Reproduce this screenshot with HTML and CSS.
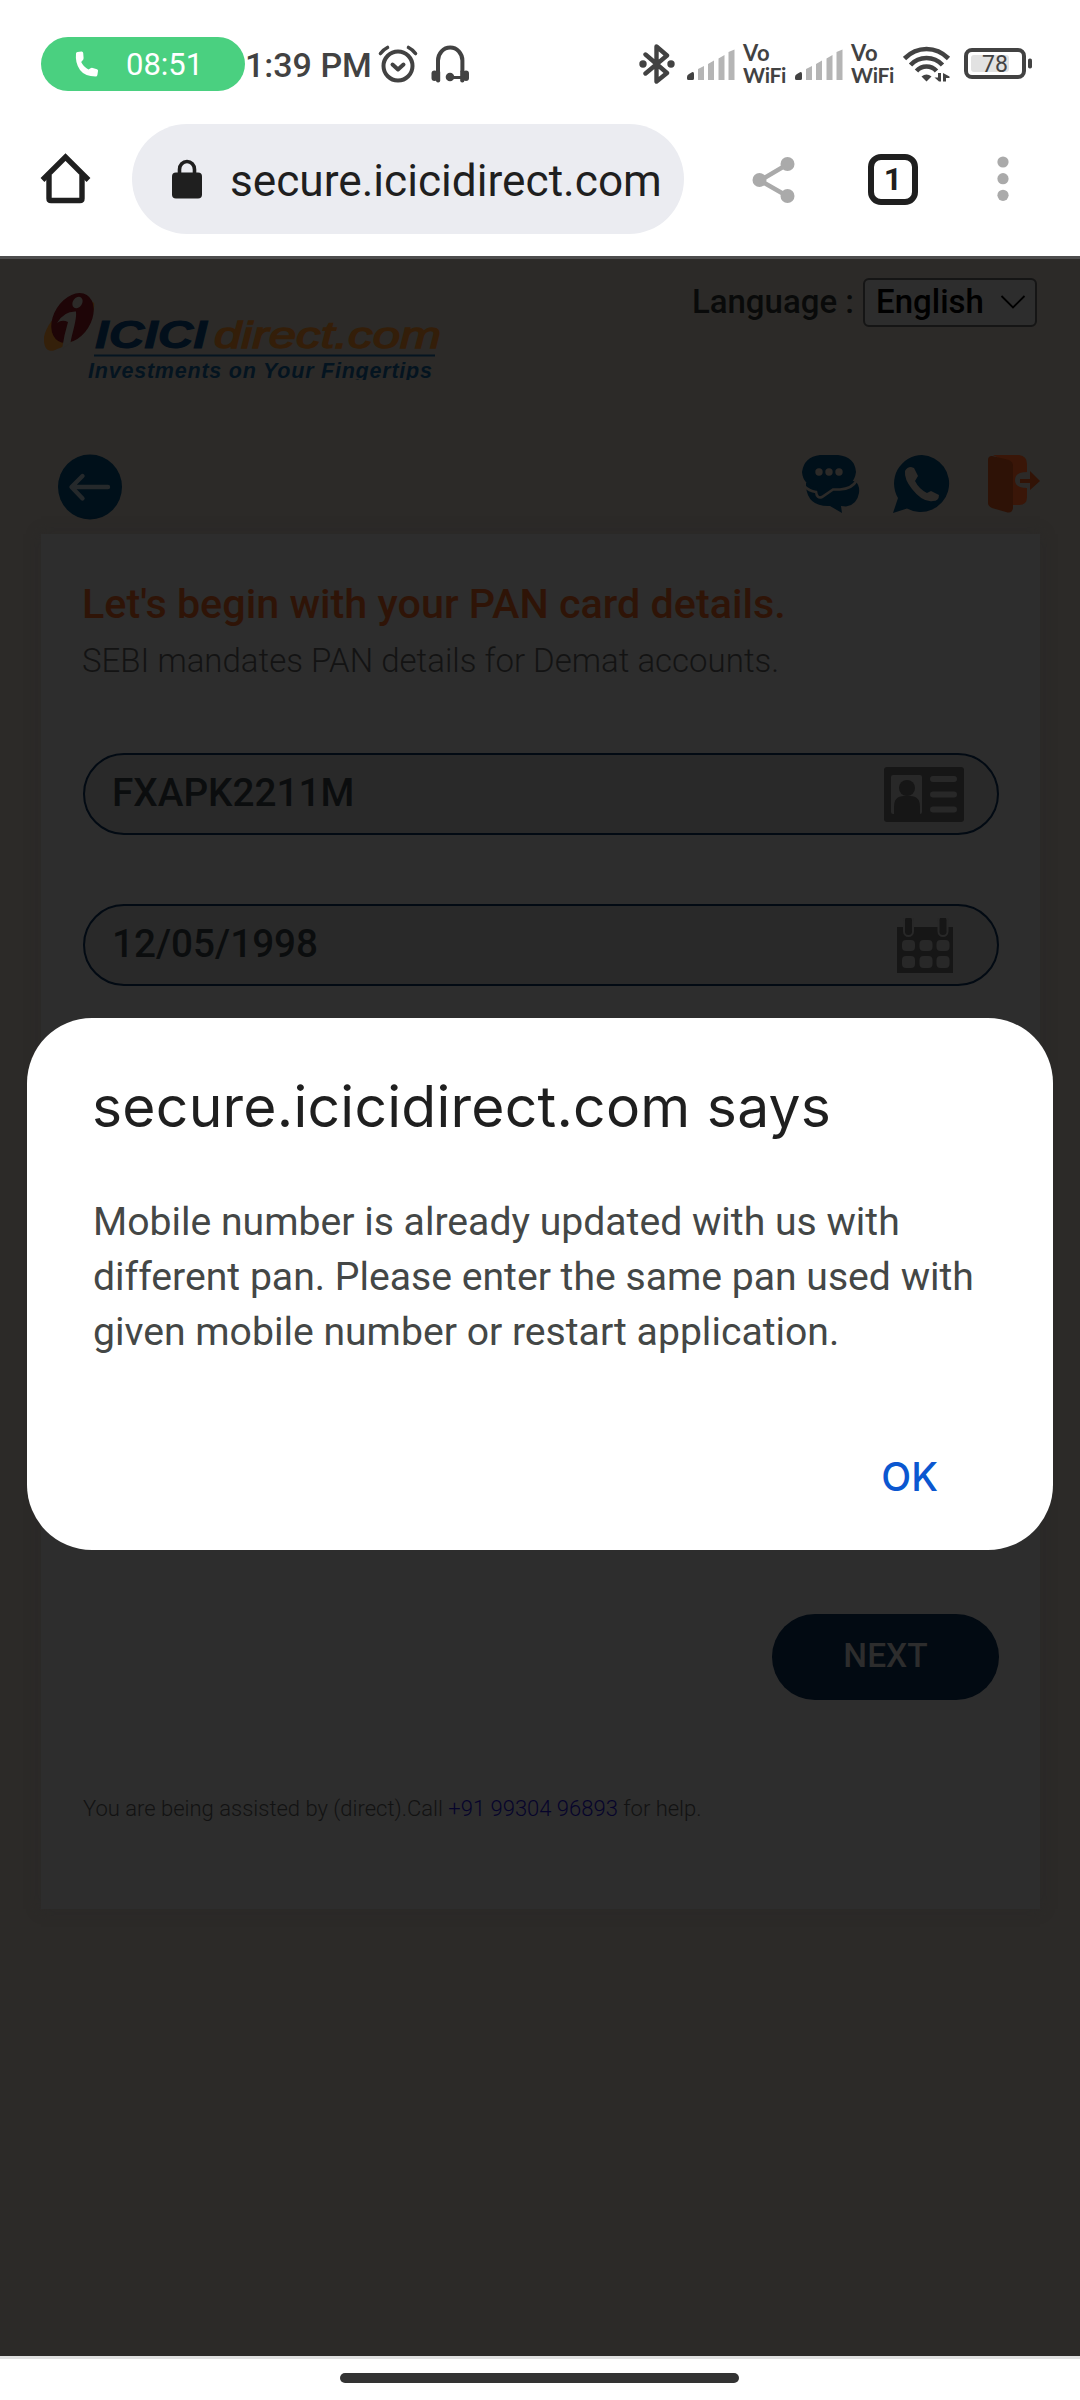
FILE: index.html
```
<!DOCTYPE html>
<html lang="en">
<head>
<meta charset="utf-8">
<title>secure.icicidirect.com</title>
<link rel="stylesheet" href="styles.css">
</head>
<body>
<div class="screen">
  <header class="status">
    <div class="call-pill">
      <svg class="call-icon" width="24" height="26" viewBox="0 0 24 26"><path d="M1 2.500Q1 1 2.500 1L6.500 .5Q8 .4 8.200 2L8.600 7Q8.600 8.500 7.500 9.500L6.200 11Q8.500 16 13.500 18.500L15.500 17.200Q16.500 16.600 17.800 17L22 18.200Q23.300 18.600 23 20L22.400 24Q22.200 25.500 20.500 25.500Q10 25.500 5 19Q0 12 1 2.500Z"/></svg>
      <span class="call-time">08:51</span>
    </div>
    <span class="clock">1:39 PM</span>
    <svg class="alarm" width="42" height="40" viewBox="0 0 42 40" fill="none" stroke="#424242" stroke-linecap="round"><circle cx="21" cy="22" r="14.500" stroke-width="4"/><path d="M15.500 20.500L21 25.500L26.500 20.500" stroke-width="4" stroke-linejoin="round"/><path d="M3.500 9.500Q6.500 5.500 10.500 3.500M38.500 9.500Q35.500 5.500 31.500 3.500" stroke-width="3.600"/></svg>
    <svg class="headset" width="38" height="38" viewBox="0 0 38 38" fill="none" stroke="#424242"><path d="M7 27V15.500A12.200 13 0 0 1 31.400 15.500V27" stroke-width="4"/><path d="M18 32.500H33" stroke-width="3"/><g fill="#424242" stroke="none"><circle cx="19" cy="32" r="4.300"/><rect x=".5" y="25.500" width="6" height="10.500" rx="3"/><rect x="5" y="25" width="4.200" height="12.500" rx="2"/><rect x="32" y="25.500" width="6" height="10.500" rx="3"/><rect x="29.200" y="25" width="4.200" height="12.500" rx="2"/></g></svg>
    <div class="status-right">
      <svg class="bt" width="38" height="40" viewBox="0 0 38 40"><path d="M7.500 10.500L29 29L18.500 37.500V2.500L29 11.500L7.500 29.500" fill="none" stroke="#424242" stroke-width="4.400" stroke-linejoin="round" stroke-linecap="round"/><circle cx="5" cy="20" r="3.700" fill="#424242"/><circle cx="33" cy="20" r="3.700" fill="#424242"/></svg>
      <svg class="signal" width="48" height="32" viewBox="0 0 48 32"><path d="M0 28Q0 26 2 25L5 23.300Q7 22.500 7 25V29.500Q7 31 5.500 31H1.500Q0 31 0 29.500Z" fill="#424242"/><path d="M11 20L17 17V31H11ZM21 15L27 11.500V31H21ZM31.500 9.500L37.500 6V31H31.500ZM41.500 3L47.500 .5V31H41.500Z" fill="#b5b5b5"/></svg>
      <div class="vowifi"><span class="vo">Vo</span><span class="wf">WiFi</span></div>
      <svg class="signal" width="48" height="32" viewBox="0 0 48 32"><path d="M0 28Q0 26 2 25L5 23.300Q7 22.500 7 25V29.500Q7 31 5.500 31H1.500Q0 31 0 29.500Z" fill="#424242"/><path d="M11 20L17 17V31H11ZM21 15L27 11.500V31H21ZM31.500 9.500L37.500 6V31H31.500ZM41.500 3L47.500 .5V31H41.500Z" fill="#b5b5b5"/></svg>
      <div class="vowifi"><span class="vo">Vo</span><span class="wf">WiFi</span></div>
      <svg class="wifi" width="48" height="36" viewBox="0 0 48 36"><g fill="none" stroke="#424242" stroke-width="4.600"><path d="M1.500 12.500Q11 3 23.500 3T45.500 12.500"/><path d="M7.500 19Q14 12 23.500 12T39.500 19"/><path d="M13.500 25Q17.500 20.500 23.500 20.500T33.500 25"/></g><path d="M18.500 30.500Q23.500 26.500 28.500 30.500L23.500 35.500Z" fill="#424242"/><path d="M35 27H38V35.500H36L31.500 31.500H35ZM40 27L46.500 30.500V32H43V35.500H40Z" fill="#424242"/></svg>
      <svg class="battery" width="70" height="32" viewBox="0 0 70 32"><rect x="2" y="2" width="58" height="27" rx="6" fill="none" stroke="#424242" stroke-width="4"/><rect x="7" y="7" width="38" height="17" rx="3" fill="#e2e2e2"/><rect x="64" y="10.500" width="4" height="10" rx="1.800" fill="#424242"/><text class="pct" x="18" y="24">78</text></svg>
    </div>
  </header>

  <nav class="toolbar">
    <svg class="home" width="52" height="52" viewBox="0 0 52 52" fill="none" stroke="#1f1f1f" stroke-width="5.400"><path d="M9 22V45.500Q9 47.500 11 47.500H40Q42 47.500 42 45.500V22"/><path d="M2.500 27L25.500 4L48.500 27"/></svg>
    <div class="url">
      <svg class="lock" width="30" height="40" viewBox="0 0 30 40"><path d="M7.500 16V10.500A7.500 8 0 0 1 22.500 10.500V16" fill="none" stroke="#1f1f1f" stroke-width="3.600"/><rect x="0" y="13.500" width="30" height="26" rx="4" fill="#1f1f1f"/></svg>
      <span class="url-text">secure.icicidirect.com</span>
    </div>
    <svg class="share" width="44" height="48" viewBox="0 0 44 48"><path d="M36 8L8 24.500L36 40.500" fill="none" stroke="#aaa" stroke-width="4.400"/><g fill="#aaa"><circle cx="35.500" cy="8" r="7"/><circle cx="7.500" cy="24" r="7"/><circle cx="35.500" cy="40" r="7"/></g></svg>
    <div class="tabs">1</div>
    <svg class="more" width="12" height="46" viewBox="0 0 12 46" fill="#aaa"><circle cx="6" cy="6" r="5.600"/><circle cx="6" cy="22.700" r="5.600"/><circle cx="6" cy="39.300" r="5.600"/></svg>
  </nav>

  <main class="page">
    <div class="masthead">
      <svg class="logo" width="400" height="87" viewBox="0 0 400 87">
        <path d="M0 44C-1 58 7 60 13 56C34 50 52 24 50 10C40 0 6 18 0 44Z" fill="#34200a"/>
        <ellipse cx="28.500" cy="25" rx="18.500" ry="27" transform="rotate(32 28.500 25)" fill="#1e0507"/>
        <ellipse cx="33.500" cy="9.500" rx="4.600" ry="6.200" transform="rotate(35 33.500 9.500)" fill="#2c2a28"/>
        <path d="M13 30Q20 18 32 18.500C33 27 28 40 26.500 50L18 56Q20 42 24 29Q18 26 13 30Z" fill="#2c2a28"/>
        <text class="logo-icici" x="51" y="55" textLength="112" lengthAdjust="spacingAndGlyphs">ICICI</text>
        <text class="logo-direct" x="170" y="55" textLength="227" lengthAdjust="spacingAndGlyphs">direct.com</text>
        <path d="M50 62.500H391" stroke="#051521" stroke-width="2"/>
        <text class="logo-tag" x="44" y="85" textLength="344">Investments on Your Fingertips</text>
      </svg>
      <div class="language">
        <span>Language :</span>
        <div class="select">English<svg width="26" height="16" viewBox="0 0 26 16" fill="none" stroke="#000" stroke-width="1.800"><path d="M1.500 2L13 13.500L24.500 2"/></svg></div>
      </div>
    </div>

    <div class="actions">
      <svg class="back" width="64" height="66" viewBox="0 0 64 66"><ellipse cx="32" cy="33" rx="32" ry="32.500" fill="#00101a"/><path d="M50 33H14M24.500 22L13.500 33L24.500 44.500" fill="none" stroke="#25292b" stroke-width="4.400" stroke-linecap="round" stroke-linejoin="round"/></svg>
      <svg class="chat" width="58" height="58" viewBox="0 0 58 58"><path d="M4 28L53 26Q58 30 57 38Q55 50 44 51.500L39 51L40 58L28 51Q6 52 4 32Z" fill="#00101a"/><path d="M18 0H36Q53 2 54 17Q52 32 36 33H31L19 44L15 33Q1 30 0 17Q2 2 18 0Z" fill="#00101a"/><path d="M2 31Q7 36 14 37Q15 44 20 42L31 34.500H38Q50 34 55 25" fill="none" stroke="#2c2a28" stroke-width="2.600"/><g fill="#2c2a28"><circle cx="17" cy="17" r="3.700"/><circle cx="27" cy="17" r="3.700"/><circle cx="37" cy="17" r="3.700"/></g></svg>
      <svg class="whatsapp" width="58" height="58" viewBox="0 0 58 58"><path d="M29 0A28.500 28.500 0 1 1 14 53.500L0 58L5 43A28.500 28.500 0 0 1 29 0Z" fill="#00101a"/><path d="M12 16Q14 12 18 12L21 13L25 21L22 26Q26 34 34 38L38 36L46 40Q46 46 40 46Q30 48 19 34Q11 24 12 16Z" fill="#2c2a28"/></svg>
      <svg class="exit" width="52" height="58" viewBox="0 0 52 58"><path d="M5 0H31Q39 1 39 9V17Q27 17 27 25T39 33V42Q39 50 31 50H20V8Z" fill="#3a1608"/><path d="M0 5Q0 1 4 1L21 5Q25 7 25 11V53Q24 59 18 57L4 53Q0 51 0 48Z" fill="#2e1206"/><path d="M32 24H42V16L52 26L42 35V28H32Z" fill="#321306"/></svg>
    </div>

    <section class="card">
      <h1 class="heading">Let's begin with your PAN card details.</h1>
      <p class="sub">SEBI mandates PAN details for Demat accounts.</p>
      <div class="field">
        <span>FXAPK2211M</span>
        <svg class="id-icon" width="80" height="55" viewBox="0 0 80 55"><rect width="80" height="55" rx="3" fill="#161616"/><g fill="#282828"><rect x="7" y="8" width="31" height="39" rx="2"/><rect x="46" y="9" width="27" height="6" rx="3"/><rect x="46" y="24.500" width="27" height="6" rx="3"/><rect x="46" y="39.500" width="27" height="6" rx="3"/></g><circle cx="23" cy="21" r="8" fill="#161616"/><path d="M10 48V40Q10 29 20 29H26Q36 29 36 40V48Z" fill="#161616"/></svg>
      </div>
      <div class="field">
        <span>12/05/1998</span>
        <svg class="cal-icon" width="56" height="55" viewBox="0 0 56 55"><path d="M0 9H56V55H0Z" fill="#161616"/><g fill="#161616" stroke="#282828" stroke-width="2"><rect x="7" y="-2" width="9" height="20" rx="4.500"/><rect x="41.500" y="-2" width="9" height="20" rx="4.500"/></g><g fill="#282828"><rect x="5" y="22" width="13" height="11" rx="4"/><rect x="22.500" y="22" width="13" height="11" rx="4"/><rect x="39.500" y="22" width="13" height="11" rx="4"/><rect x="5" y="38" width="13" height="12" rx="4"/><rect x="22.500" y="38" width="13" height="12" rx="4"/><rect x="39.500" y="38" width="13" height="12" rx="4"/></g></svg>
      </div>
      <div class="next">NEXT</div>
      <p class="help">You are being assisted by (direct).Call <a class="tel">+91 99304 96893</a> for help.</p>
    </section>
  </main>

  <footer class="gesture"><div class="handle"></div></footer>

  <div class="dialog" role="alertdialog">
    <h2 class="dialog-title">secure.icicidirect.com says</h2>
    <p class="dialog-body">Mobile number is already updated with us with<br>different pan. Please enter the same pan used with<br>given mobile number or restart application.</p>
    <div class="dialog-ok">OK</div>
  </div>
</div>
</body>
</html>
```
FILE: styles.css
```
* { box-sizing: border-box; }
body { margin: 0; font-family: Roboto, sans-serif; }
h1, h2, p { margin: 0; }
svg { display: block; flex: none; }
.screen { position: relative; width: 1080px; height: 2400px; display: flex; flex-direction: column; background: #fff; overflow: hidden; white-space: nowrap; }

.status { height: 124px; padding: 4px 46px 0 41px; display: flex; align-items: center; color: #424242; }
.call-pill { width: 204px; height: 54px; border-radius: 27px; background: #4ad080; color: #fff; display: flex; align-items: center; padding-left: 34px; }
.call-icon { fill: #fff; }
.call-time { font-size: 31px; margin-left: 27px; }
.clock { font-size: 34px; font-weight: 500; line-height: 40px; margin-top: 2px; }
.alarm { margin-left: 5px; }
.headset { margin-left: 12px; }
.status-right { margin-left: auto; display: flex; align-items: center; }
.signal { margin: 2px 0 0 11px; }
.vowifi { width: 44px; margin-left: 8px; display: flex; flex-direction: column; font: 700 22px/22px Lato, sans-serif; }
.vo { letter-spacing: .5px; }
.wf { font-size: 21px; letter-spacing: -.3px; }
.vowifi + .signal { margin-left: 8px; }
.wifi { margin-left: 8px; }
.battery { margin-left: 13px; }
.pct { font: 400 23px Roboto, sans-serif; fill: #424242; }

.toolbar { height: 132px; padding: 0 0 22px 40px; display: flex; align-items: center; color: #1f1f1f; }
.url { width: 552px; height: 110px; margin-left: 40px; padding-left: 40px; border-radius: 55px; background: #ebecf1; display: flex; align-items: center; }
.url-text { font-size: 44.200px; line-height: 54px; margin: 3px 0 0 28px; }
.share { margin: 1px 0 0 68px; }
.tabs { width: 50px; height: 51px; margin-left: 72px; border: 6px solid #1f1f1f; border-radius: 13px; font: 700 32px/38px Roboto, sans-serif; text-align: center; }
.more { margin: 0 0 0 79px; }

.page { height: 2100px; border-top: 3px solid #4d4d4d; background: #2c2a28; padding: 0 40px 0 41px; display: flex; flex-direction: column; }
.masthead { height: 195px; display: flex; justify-content: space-between; }
.logo { margin: 34px 0 0 3px; overflow: hidden; }
.logo-icici { font: italic 700 39px "Liberation Sans", Arial, sans-serif; fill: #020f1b; stroke: #020f1b; stroke-width: 1px; }
.logo-direct { font: italic 400 37px "Liberation Sans", Arial, sans-serif; fill: #341e09; stroke: #341e09; stroke-width: 1.400px; }
.logo-tag { font: italic 700 21.500px "Liberation Sans", Arial, sans-serif; fill: #041420; }
.language { display: flex; align-items: flex-start; padding: 19px 3px 0 0; font-size: 33px; font-weight: 500; line-height: 47px; color: #090a0a; }
.select { width: 174px; height: 49px; margin-left: 9px; padding: 0 9px 2px 11px; border: 2px solid #151515; border-radius: 6px; background: #2d2d2d; color: #000; display: flex; align-items: center; justify-content: space-between; }

.actions { height: 80px; display: flex; align-items: flex-start; }
.back { margin-left: 17px; }
.chat { margin: 1px 0 0 auto; }
.whatsapp { margin: 1px 0 0 33px; }
.exit { margin: 1px 0 0 37px; }

.card { width: 999px; height: 1375px; background: #2d2d2d; box-shadow: 0 0 12px rgba(40, 40, 40, .5); padding: 45px 41px 0 42px; display: flex; flex-direction: column; }
.heading { font-size: 41.300px; font-weight: 500; line-height: 50px; color: #2f1407; margin-left: -1px; }
.sub { font-size: 33px; font-weight: 300; line-height: 44px; color: #131313; margin: 10px 0 70px -1px; }
.field { height: 82px; margin-bottom: 69px; padding: 0 33px 3px 27px; border: 2px solid #020a13; border-radius: 41px; background: #292929; display: flex; align-items: center; justify-content: space-between; font-size: 38.700px; font-weight: 500; color: #0b0d0e; }
.id-icon { margin-top: 4px; }
.cal-icon { margin: 4px 11px 0 0; }
.next { align-self: flex-end; width: 227px; height: 86px; margin-top: 559px; border-radius: 43px; background: #020a12; color: #2d2d2d; font-size: 33.500px; font-weight: 500; line-height: 84px; text-align: center; }
.help { font-size: 22px; font-weight: 300; line-height: 30px; color: #121212; margin-top: 94px; }
.tel { color: #06042b; }

.gesture { height: 44px; border-top: 3px solid #e0e0e0; padding-top: 14px; }
.handle { width: 399px; height: 10px; margin-left: 340px; border-radius: 5px; background: #333; }

.dialog { position: absolute; left: 27px; top: 1018px; width: 1026px; height: 532px; border-radius: 65px; background: #fff; padding: 56px 67px 0; }
.dialog-title { font: 400 57px/66px Inter, sans-serif; letter-spacing: .25px; margin-left: -2px; color: #1f1f1f; }
.dialog-body { font-size: 39.150px; line-height: 55px; color: #444746; margin: 55px 0 92px -1px; }
.dialog-ok { font: 500 39px/50px Inter, sans-serif; color: #0b57d0; text-align: right; padding-right: 48px; }
```
